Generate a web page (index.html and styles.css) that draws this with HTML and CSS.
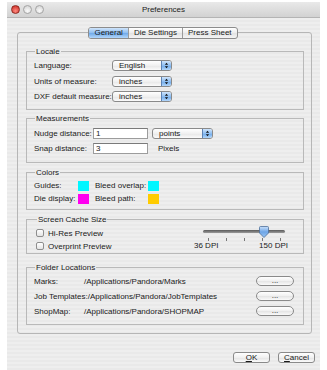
FILE: index.html
```html
<!DOCTYPE html>
<html lang="en">

<head>
    <meta charset="UTF-8">
    <title>Preferences</title>
    <link rel="stylesheet" href="styles.css">
</head>

<body>
    <div class="window">
        <div class="titlebar">
            <div class="lights">
                <span class="light close"></span>
                <span class="light"></span>
                <span class="light"></span>
            </div>
            <div class="title">Preferences</div>
            <div></div>
        </div>

        <div class="panel">
            <div class="tabs">
                <span class="tab active">General</span>
                <span class="tab">Die Settings</span>
                <span class="tab">Press Sheet</span>
            </div>

            <fieldset class="group locale">
                <legend>Locale</legend>
                <div class="row">
                    <span class="lbl">Language:</span>
                    <span class="popup"><span class="val">English</span><span class="arrows"><svg viewBox="0 0 10 11"><path d="M3 4.5L5 2l2 2.5zM3 6.5L5 9l2-2.5z" /></svg></span></span>
                </div>
                <div class="row">
                    <span class="lbl">Units of measure:</span>
                    <span class="popup"><span class="val">inches</span><span class="arrows"><svg viewBox="0 0 10 11"><path d="M3 4.5L5 2l2 2.5zM3 6.5L5 9l2-2.5z" /></svg></span></span>
                </div>
                <div class="row">
                    <span class="lbl">DXF default measure:</span>
                    <span class="popup"><span class="val">inches</span><span class="arrows"><svg viewBox="0 0 10 11"><path d="M3 4.5L5 2l2 2.5zM3 6.5L5 9l2-2.5z" /></svg></span></span>
                </div>
            </fieldset>

            <fieldset class="group measure">
                <legend>Measurements</legend>
                <div class="row">
                    <span class="lbl">Nudge distance:</span>
                    <span class="field">1</span>
                    <span class="popup wide"><span class="val">points</span><span class="arrows"><svg viewBox="0 0 10 11"><path d="M3 4.5L5 2l2 2.5zM3 6.5L5 9l2-2.5z" /></svg></span></span>
                </div>
                <div class="row">
                    <span class="lbl">Snap distance:</span>
                    <span class="field">3</span>
                    <span class="unit">Pixels</span>
                </div>
            </fieldset>

            <fieldset class="group colors">
                <legend>Colors</legend>
                <div class="row">
                    <span class="lbl">Guides:</span>
                    <span class="swatch cyan"></span>
                    <span class="lbl2">Bleed overlap:</span>
                    <span class="swatch cyan"></span>
                </div>
                <div class="row">
                    <span class="lbl">Die display:</span>
                    <span class="swatch magenta"></span>
                    <span class="lbl2">Bleed path:</span>
                    <span class="swatch gold"></span>
                </div>
            </fieldset>

            <fieldset class="group cache">
                <legend>Screen Cache Size</legend>
                <div class="cache-body">
                    <div class="checks">
                        <div class="check"><span class="box"></span>Hi-Res Preview</div>
                        <div class="check"><span class="box"></span>Overprint Preview</div>
                    </div>
                    <div class="slider">
                        <div class="track-wrap">
                            <div class="track"></div>
                            <svg class="thumb" viewBox="0 0 10 12">
                                <defs>
                                    <linearGradient id="tg" x1="0" y1="0" x2="0" y2="1">
                                        <stop offset="0" stop-color="#c9e0fb" />
                                        <stop offset="0.5" stop-color="#6fa6e6" />
                                        <stop offset="1" stop-color="#9cc6f4" />
                                    </linearGradient>
                                </defs>
                                <path d="M1.5 0.5h7a1 1 0 0 1 1 1v5.5l-4.5 4.5l-4.5-4.5v-5.5a1 1 0 0 1 1-1z" fill="url(#tg)" stroke="#4d6f9a" stroke-width="0.8" />
                            </svg>
                            <div class="ticks"><i></i><i></i><i></i><i></i><i></i></div>
                        </div>
                        <div class="dpi"><span>36 DPI</span><span>150 DPI</span></div>
                    </div>
                </div>
            </fieldset>

            <fieldset class="group folders">
                <legend>Folder Locations</legend>
                <div class="row">
                    <span class="flbl">Marks:</span>
                    <span class="path">/Applications/Pandora/Marks</span>
                    <span class="pill">...</span>
                </div>
                <div class="row">
                    <span class="flbl">Job Templates:</span>
                    <span class="path">/Applications/Pandora/JobTemplates</span>
                    <span class="pill">...</span>
                </div>
                <div class="row">
                    <span class="flbl">ShopMap:</span>
                    <span class="path">/Applications/Pandora/SHOPMAP</span>
                    <span class="pill">...</span>
                </div>
            </fieldset>
        </div>

        <div class="actions">
            <span class="btn"><u>O</u>K</span>
            <span class="btn"><u>C</u>ancel</span>
        </div>
    </div>
</body>

</html>
```

FILE: styles.css
```css
* {
    margin: 0;
    padding: 0;
    box-sizing: border-box;
}

body {
    background: #fff;
    font-family: "Liberation Sans", Arial, sans-serif;
    font-size: 8px;
    color: #1a1a1a;
}

.window {
    margin: 2px 0 0 7px;
    width: 313px;
    height: 368px;
    background: repeating-linear-gradient(#eeeeee 0 2px, #e9e9e9 2px 4px);
}

.titlebar {
    height: 16px;
    display: grid;
    grid-template-columns: 1fr auto 1fr;
    align-items: center;
    background: linear-gradient(#e9e9e9, #d2d2d2);
    border-bottom: 1px solid #b4b4b4;
}

.lights {
    display: flex;
    gap: 3px;
    padding-left: 4px;
}

.light {
    width: 9px;
    height: 9px;
    border-radius: 50%;
    background: radial-gradient(circle at 50% 70%, #fafafa, #cfcfcf);
    border: 1px solid #a4a4a4;
}

.light.close {
    background: radial-gradient(circle at 50% 70%, #ff8a80, #c8241c);
    border-color: #8e2a22;
}

.title {
    font-size: 8px;
    color: #222;
}

.panel {
    margin: 14px 8px 0 10px;
    height: 302px;
    border: 1px solid #b6b6b6;
    border-radius: 3px;
    padding: 0 7px 0 8px;
}

.tabs {
    display: flex;
    width: max-content;
    margin: -6px auto 0;
    position: relative;
    left: -2px;
    border: 1px solid #8c8c8c;
    border-radius: 3px;
    background: linear-gradient(#ffffff, #ececec 50%, #e2e2e2 51%, #f4f4f4);
    overflow: hidden;
}

.tab {
    height: 10px;
    line-height: 10px;
    padding: 0 5px;
    font-size: 8px;
    border-left: 1px solid #9a9a9a;
}

.tab:first-child {
    border-left: none;
}

.tab.active {
    background: linear-gradient(#cfe4fb, #8dbdf0 50%, #6ea9ea 51%, #b2d6fa);
}

.group {
    border: 1px solid #b9b9b9;
    margin-top: 5px;
    padding: 4px 7px 7px;
    min-width: 0;
}

.group legend {
    font-size: 8px;
    line-height: 9px;
    padding: 0 1px;
    margin-left: 1px;
}

.locale {
    margin-top: 8px;
    display: flex;
    flex-direction: column;
    gap: 4.5px;
}

.row {
    display: flex;
    align-items: center;
    height: 11px;
}

.lbl {
    width: 78px;
}

.popup {
    display: flex;
    width: 60px;
    height: 11px;
    border: 1px solid #8a8a8a;
    border-radius: 3px;
    background: linear-gradient(#ffffff, #f0f0f0 50%, #e6e6e6 51%, #fbfbfb);
    overflow: hidden;
}

.popup .val {
    flex: 1;
    line-height: 9px;
    padding-left: 6px;
}

.arrows {
    width: 10px;
    border-left: 1px solid #5d83b4;
    background: linear-gradient(#cfe4fb, #8dbdf0 50%, #6ea9ea 51%, #b2d6fa);
}

.arrows svg {
    display: block;
    width: 9px;
    height: 9px;
    fill: #111;
}

.measure {
    display: flex;
    flex-direction: column;
    gap: 4px;
    padding-top: 5px;
    padding-bottom: 8px;
    margin-top: 4px;
}

.measure .lbl {
    width: 59px;
}

.field {
    width: 55px;
    height: 11px;
    line-height: 10px;
    padding-left: 2px;
    background: #fff;
    border: 1px solid #9c9c9c;
    border-top-color: #7a7a7a;
}

.popup.wide {
    margin-left: 4px;
    width: 61px;
}

.unit {
    margin-left: 10px;
}

.colors {
    display: flex;
    flex-direction: column;
    gap: 2px;
    padding-top: 3px;
    padding-bottom: 5px;
}

.colors .lbl {
    width: 44px;
}

.lbl2 {
    width: 53px;
    margin-left: 6px;
}

.swatch {
    width: 11px;
    height: 10px;
}

.cyan {
    background: #00f6ff;
}

.magenta {
    background: #ff00f0;
}

.gold {
    background: #ffcc00;
}

.cache {
    padding: 3px 15px 3px 9px;
}

.cache-body {
    display: flex;
    align-items: flex-start;
}

.checks {
    display: flex;
    flex-direction: column;
    gap: 5px;
    padding-top: 2px;
}

.check {
    display: flex;
    align-items: center;
    gap: 4px;
    height: 8px;
}

.box {
    width: 8px;
    height: 8px;
    border: 1px solid #8e8e8e;
    border-radius: 2px;
    background: linear-gradient(#ffffff, #e4e4e4);
}

.slider {
    margin-left: auto;
    width: 94px;
}

.track-wrap {
    position: relative;
    margin-left: 9px;
    margin-right: 3px;
    height: 14px;
    padding-top: 3px;
}

.track {
    height: 3px;
    border-radius: 2px;
    background: linear-gradient(#5a5a5a, #9a9a9a);
}

.thumb {
    position: absolute;
    left: 56px;
    top: -1px;
    width: 10px;
    height: 12px;
}

.ticks {
    display: flex;
    justify-content: space-between;
    padding: 0 4px 0 5px;
    margin-top: 5px;
}

.ticks i {
    width: 1px;
    height: 3px;
    background: #777;
}

.dpi {
    display: flex;
    justify-content: space-between;
    line-height: 9px;
}

.folders {
    margin-top: 9px;
    display: flex;
    flex-direction: column;
    gap: 5px;
    padding: 4px 9px 8px 7px;
}

.folders .row {
    height: 10px;
}

.flbl {
    min-width: 50px;
    white-space: nowrap;
}

.path {
    flex: 1;
    white-space: nowrap;
}

.pill {
    width: 38px;
    height: 10px;
    line-height: 7px;
    text-align: center;
    border: 1px solid #8a8a8a;
    border-radius: 5px;
    background: linear-gradient(#ffffff, #f0f0f0 50%, #e4e4e4 51%, #fafafa);
}

.actions {
    display: flex;
    justify-content: flex-end;
    gap: 8px;
    margin-top: 18px;
    padding-right: 5px;
}

.btn {
    width: 37px;
    height: 11px;
    line-height: 9px;
    text-align: center;
    border: 1px solid #8a8a8a;
    border-radius: 3px;
    background: linear-gradient(#ffffff, #f0f0f0 50%, #e4e4e4 51%, #fafafa);
}
```
